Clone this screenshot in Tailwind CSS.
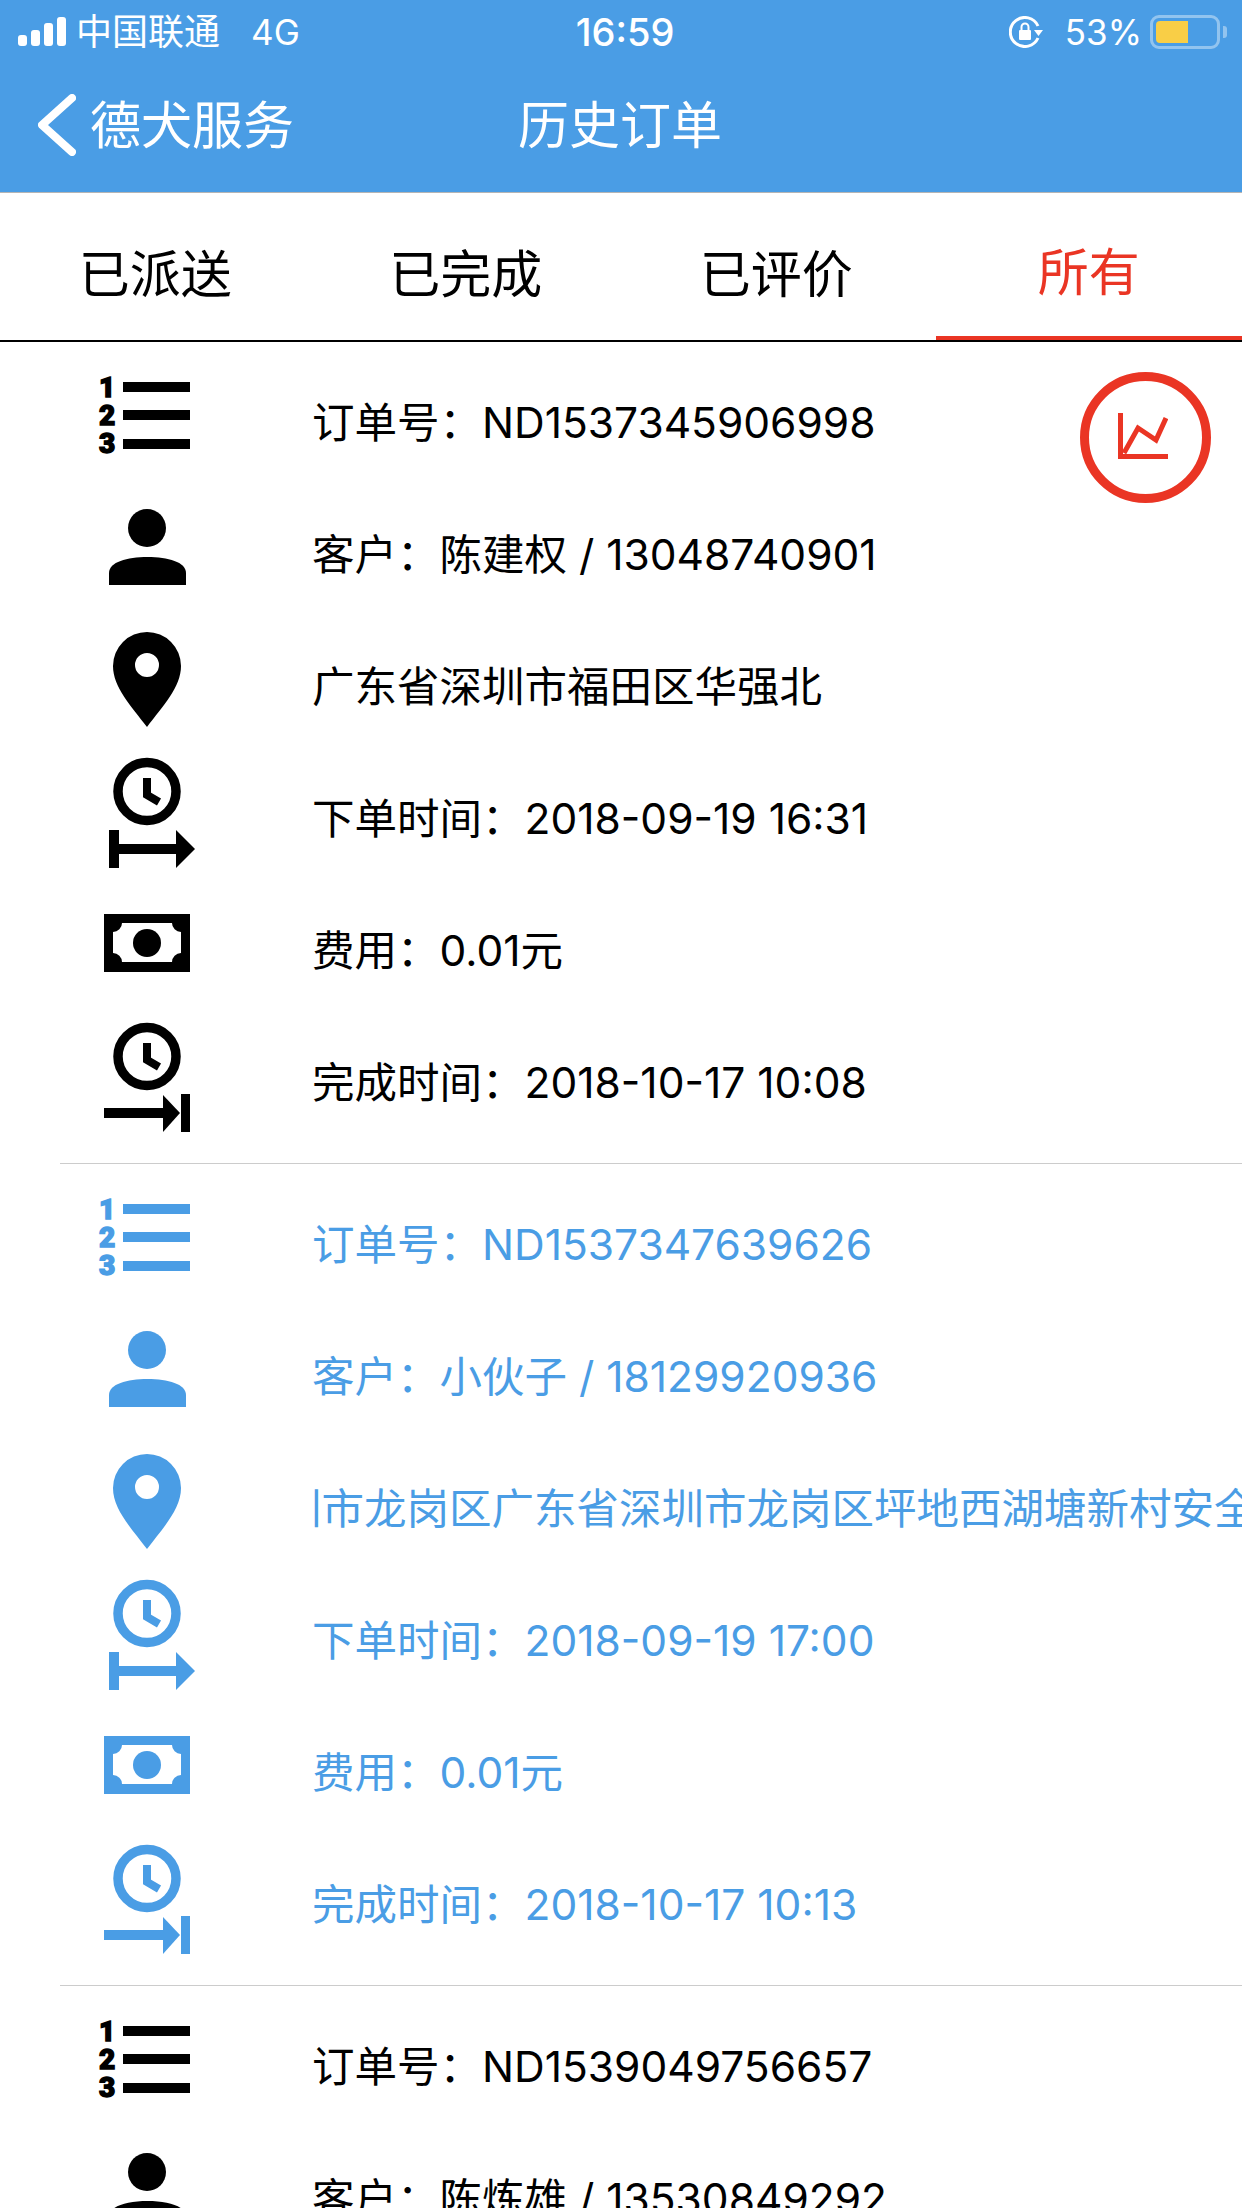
<!doctype html>
<html lang="zh-CN">
<head>
  <meta charset="UTF-8">
  <meta name="viewport" content="width=device-width, initial-scale=1.0">
  <title>历史订单</title>
  <script src="https://cdn.jsdelivr.net/npm/@tailwindcss/browser@4"></script>
</head>
<body class="relative w-[1242px] h-[2208px] overflow-hidden bg-white text-black text-[42.5px] font-['Inter','Noto_Sans_CJK_SC',sans-serif]">

  <!-- shared icons, 132x132 box per row -->
  <svg class="hidden">
    <symbol id="i-order" viewBox="0 0 132 132">
      <g font-family="Roboto" font-weight="900" font-size="28" stroke="currentColor" stroke-width="1.400">
        <text x="18" y="40">1</text>
        <text x="18" y="68">2</text>
        <text x="18" y="96">3</text>
      </g>
      <rect x="42" y="25" width="67" height="10"/>
      <rect x="42" y="53" width="67" height="10"/>
      <rect x="42" y="82" width="67" height="10"/>
    </symbol>
    <symbol id="i-user" viewBox="0 0 132 132">
      <circle cx="66" cy="39" r="19"/>
      <path d="M28 96V84C28 73 46 68 66.500 68C87 68 105 73 105 84V96Z"/>
    </symbol>
    <symbol id="i-pin" viewBox="0 0 132 132">
      <path fill-rule="evenodd" d="M66 106C50 85 32 66 32 45A34 34 0 0 1 100 45C100 66 82 85 66 106ZM66 32A12 12 0 1 0 66 56A12 12 0 1 0 66 32Z"/>
    </symbol>
    <symbol id="i-start" viewBox="0 0 132 132">
      <circle cx="66" cy="38.500" r="29" fill="none" stroke="currentColor" stroke-width="9.500"/>
      <path d="M66 25V42L78 49" fill="none" stroke="currentColor" stroke-width="8"/>
      <rect x="28" y="77" width="10" height="38"/>
      <rect x="38" y="91" width="58" height="10"/>
      <path d="M95 77L114 96L95 115Z"/>
    </symbol>
    <symbol id="i-money" viewBox="0 0 132 132">
      <path fill-rule="evenodd" d="M23 29H109V87H23ZM41 38A9 9 0 0 1 32 47V68A9 9 0 0 1 41 77H91A9 9 0 0 1 100 68V47A9 9 0 0 1 91 38Z"/>
      <circle cx="66" cy="58" r="14"/>
    </symbol>
    <symbol id="i-end" viewBox="0 0 132 132">
      <circle cx="66" cy="39.500" r="29" fill="none" stroke="currentColor" stroke-width="9.500"/>
      <path d="M66 26V43L78 50" fill="none" stroke="currentColor" stroke-width="8"/>
      <rect x="23" y="91" width="60" height="10"/>
      <path d="M82 78L99 96L82 115Z"/>
      <rect x="100" y="77" width="9" height="38"/>
    </symbol>
  </svg>

  <!-- header -->
  <header class="bg-[#4a9de5] text-white h-[192px]">
    <div class="h-[62px] grid grid-cols-3 items-center text-[36px] pt-[2px]">
      <div class="flex items-center pl-[18px]">
        <svg class="w-[48px] h-[30px]" viewBox="0 0 48 30" fill="white">
          <rect x="0" y="18" width="9" height="11" rx="3"/>
          <rect x="13" y="13" width="9" height="16" rx="3"/>
          <rect x="26" y="6" width="9" height="23" rx="3"/>
          <rect x="39" y="0" width="9" height="29" rx="3"/>
        </svg>
        <span class="ml-[10px]">中国联通</span>
        <span class="ml-[31px] text-[35px]">4G</span>
      </div>
      <div class="text-center font-medium text-[38px] pl-[8px]">16:59</div>
      <div class="flex items-center justify-end pr-[15px]">
        <svg class="w-[35px] h-[32px]" viewBox="0 0 35 32" fill="none" stroke="white" stroke-width="3">
          <path d="M29 22A14.500 14.500 0 1 1 29 10"/>
          <path d="M25 14H34L29.500 20Z" fill="white" stroke="none"/>
          <rect x="10" y="14" width="12" height="10" rx="1" fill="white" stroke="none"/>
          <path d="M12.500 14V11A3.500 3.500 0 0 1 19.500 11V14" stroke-width="2"/>
        </svg>
        <span class="ml-[21px] text-[35px]">53%</span>
        <div class="ml-[8px] w-[70px] h-[34px] rounded-[9px] border-[3px] border-white/40 p-[3px]">
          <div class="w-[32px] h-full rounded-l-[4px] bg-[#f9ce46]"></div>
        </div>
        <div class="ml-[3px] w-[4px] h-[12px] rounded-r-[3px] bg-white/40"></div>
      </div>
    </div>
    <div class="h-[130px] grid grid-cols-3 items-center text-[51px] leading-none pb-[4px]">
      <div class="flex items-center pl-[38px]">
        <svg class="w-[38px] h-[62px]" viewBox="0 0 38 62" fill="none" stroke="white" stroke-width="8" stroke-linecap="round" stroke-linejoin="round">
          <path d="M34 4L4 31L34 58"/>
        </svg>
        <span class="ml-[14px] whitespace-nowrap">德犬服务</span>
      </div>
      <div class="text-center pr-[2px]">历史订单</div>
    </div>
  </header>

  <!-- tabs -->
  <nav class="grid grid-cols-4 h-[150px] border-t border-[#b5b5b5] border-b-2 border-b-black text-[51px] leading-none text-center">
    <div class="flex items-center justify-center pt-[16px]">已派送</div>
    <div class="flex items-center justify-center pt-[16px]">已完成</div>
    <div class="flex items-center justify-center pt-[16px]">已评价</div>
    <div class="flex items-center justify-center pt-[16px] ml-[4px] text-[#ea3524] border-b-4 border-[#ea3524]">所有</div>
  </nav>

  <main>
    <section class="relative py-[15px] h-[822px]">
      <div class="flex h-[132px] items-center"><svg class="ml-[81px] w-[132px] h-[132px] shrink-0"><use href="#i-order"/></svg><p class="ml-[99px]">订单号：ND1537345906998</p></div>
      <div class="flex h-[132px] items-center"><svg class="ml-[81px] w-[132px] h-[132px] shrink-0"><use href="#i-user"/></svg><p class="ml-[99px]">客户：陈建权 / 13048740901</p></div>
      <div class="flex h-[132px] items-center"><svg class="ml-[81px] w-[132px] h-[132px] shrink-0"><use href="#i-pin"/></svg><p class="ml-[99px]">广东省深圳市福田区华强北</p></div>
      <div class="flex h-[132px] items-center"><svg class="ml-[81px] w-[132px] h-[132px] shrink-0"><use href="#i-start"/></svg><p class="ml-[99px]">下单时间：2018-09-19 16:31</p></div>
      <div class="flex h-[132px] items-center"><svg class="ml-[81px] w-[132px] h-[132px] shrink-0"><use href="#i-money"/></svg><p class="ml-[99px]">费用：0.01元</p></div>
      <div class="flex h-[132px] items-center"><svg class="ml-[81px] w-[132px] h-[132px] shrink-0"><use href="#i-end"/></svg><p class="ml-[99px]">完成时间：2018-10-17 10:08</p></div>
      <div class="absolute bottom-0 left-[60px] right-0 h-px bg-[#cccccc]"></div>
    </section>

    <section class="relative py-[15px] h-[822px] text-[#4a9de5] fill-[#4a9de5]">
      <div class="flex h-[132px] items-center"><svg class="ml-[81px] w-[132px] h-[132px] shrink-0"><use href="#i-order"/></svg><p class="ml-[99px]">订单号：ND1537347639626</p></div>
      <div class="flex h-[132px] items-center"><svg class="ml-[81px] w-[132px] h-[132px] shrink-0"><use href="#i-user"/></svg><p class="ml-[99px]">客户：小伙子 / 18129920936</p></div>
      <div class="flex h-[132px] items-center"><svg class="ml-[81px] w-[132px] h-[132px] shrink-0"><use href="#i-pin"/></svg>
        <div class="ml-[99px] flex-1 min-w-0 overflow-hidden"><p class="ml-[-203px] whitespace-nowrap">广东省深圳市龙岗区广东省深圳市龙岗区坪地西湖塘新村安全</p></div>
      </div>
      <div class="flex h-[132px] items-center"><svg class="ml-[81px] w-[132px] h-[132px] shrink-0"><use href="#i-start"/></svg><p class="ml-[99px]">下单时间：2018-09-19 17:00</p></div>
      <div class="flex h-[132px] items-center"><svg class="ml-[81px] w-[132px] h-[132px] shrink-0"><use href="#i-money"/></svg><p class="ml-[99px]">费用：0.01元</p></div>
      <div class="flex h-[132px] items-center"><svg class="ml-[81px] w-[132px] h-[132px] shrink-0"><use href="#i-end"/></svg><p class="ml-[99px]">完成时间：2018-10-17 10:13</p></div>
      <div class="absolute bottom-0 left-[60px] right-0 h-px bg-[#cccccc]"></div>
    </section>

    <section class="relative py-[15px]">
      <div class="flex h-[132px] items-center"><svg class="ml-[81px] w-[132px] h-[132px] shrink-0"><use href="#i-order"/></svg><p class="ml-[99px]">订单号：ND1539049756657</p></div>
      <div class="flex h-[132px] items-center"><svg class="ml-[81px] w-[132px] h-[132px] shrink-0"><use href="#i-user"/></svg><p class="ml-[99px]">客户：陈炼雄 / 13530849292</p></div>
    </section>
  </main>

  <!-- floating stats button -->
  <button class="absolute left-[1080px] top-[372px] w-[131px] h-[131px] rounded-full border-[9px] border-[#ea3524] flex items-center justify-center">
    <svg class="w-[50px] h-[46px] mr-[5px] mb-[4px]" viewBox="0 0 50 46" fill="none" stroke="#ea3524" stroke-width="5">
      <path d="M2.500 0V43.500H50"/>
      <path d="M6 40L20 15L38 27L48 5"/>
    </svg>
  </button>
</body>
</html>
